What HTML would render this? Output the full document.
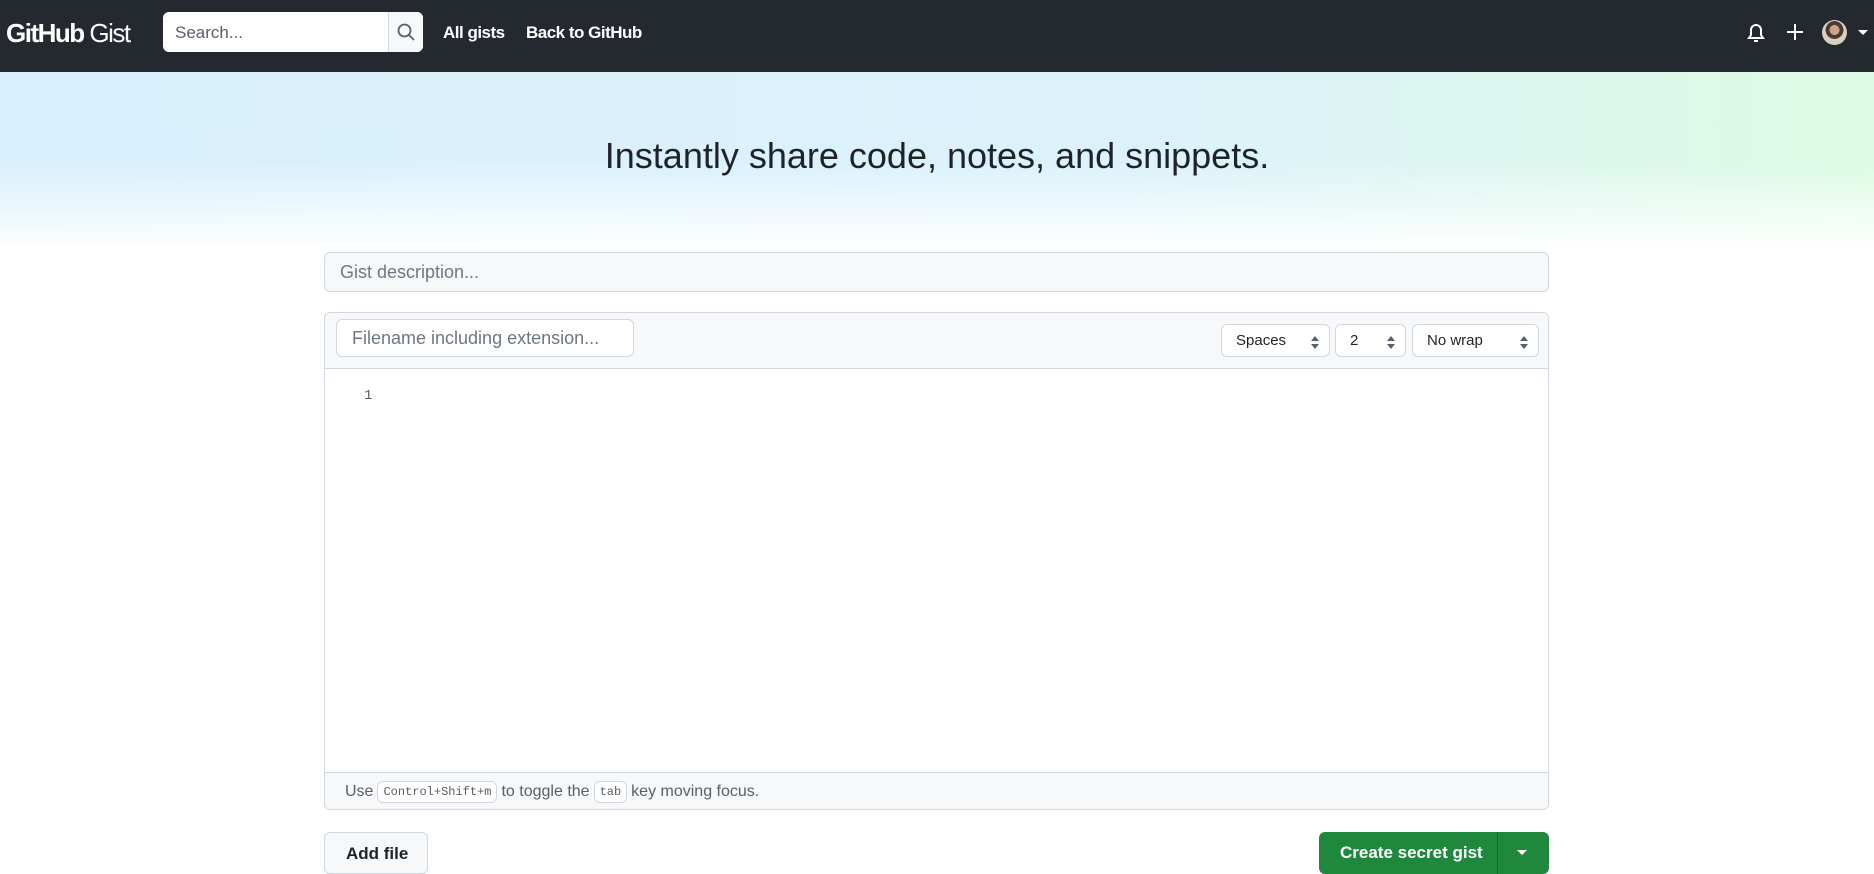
<!DOCTYPE html>
<html><head><meta charset="utf-8"><style>
*{box-sizing:border-box;margin:0;padding:0}
body{width:1874px;height:870px;overflow:hidden;font-family:"Liberation Sans",sans-serif;background:#fff;position:relative;color:#1f2328}
.hdr{position:absolute;left:0;top:0;width:1874px;height:72px;background:#24292f}
.abs{position:absolute}
.hero{position:absolute;top:72px;left:0;width:1874px;height:180px;background:linear-gradient(180deg,rgba(255,255,255,0) 50%,#fff 100%),linear-gradient(90deg,#d8f0fd 0%,#dcf2fb 60%,#dcfbe4 100%)}
.inp{position:absolute;border:1px solid #d0d7de;border-radius:6px;background:#f6f8fa;color:#6e7781;font-size:18px;padding-left:15px;display:flex;align-items:center}
.sel{position:absolute;border:1px solid #d0d7de;border-radius:6px;background:#fff;font-size:15px;display:flex;align-items:center;padding-left:14px;color:#1f2328}
.sel:after{content:"";position:absolute;right:10px;top:11px;width:0;height:0;border:4px solid transparent;border-bottom:5px solid #57606a;border-top:0}
.sel:before{content:"";position:absolute;right:10px;top:19px;width:0;height:0;border:4px solid transparent;border-top:5px solid #57606a;border-bottom:0}
code{font-family:"Liberation Mono",monospace;font-size:12px;border:1px solid #d0d7de;border-radius:6px;padding:3px 5px;background:#fff;margin:0 4px}
</style></head><body>
<div class="hdr">
<div class="abs" style="left:6px;top:18px;color:#fff;font-size:26px;letter-spacing:-1.5px"><b>GitHub</b><span style="font-weight:300"> Gist</span></div>
<div class="abs" style="left:163px;top:12px;width:260px;height:40px;background:#fff;border-radius:6px;overflow:hidden">
<span class="abs" style="left:12px;top:11px;font-size:17px;color:#57606a">Search...</span>
<div class="abs" style="left:225px;top:0;width:35px;height:40px;background:#f6f8fa;border-left:1px solid #d0d7de">
<svg class="abs" style="left:8px;top:11px" width="18" height="18" viewBox="0 0 18 18" fill="none" stroke="#57606a" stroke-width="1.8"><circle cx="7.5" cy="7.5" r="6"/><path d="M12 12l5 5"/></svg></div></div>
<div class="abs" style="left:443px;top:23px;color:#fff;font-size:17px;font-weight:bold;letter-spacing:-0.5px">All gists</div>
<div class="abs" style="left:526px;top:23px;color:#fff;font-size:17px;font-weight:bold;letter-spacing:-0.5px">Back to GitHub</div>
<svg class="abs" style="left:1746px;top:21px" width="20" height="24" viewBox="0 0 20 24" fill="none" stroke="#fff" stroke-width="2"><path d="M3 17h14l-2-3V9a5 5 0 0 0-10 0v5z"/><path d="M8 20h4"/></svg>
<svg class="abs" style="left:1786px;top:23px" width="18" height="18" viewBox="0 0 18 18" stroke="#fff" stroke-width="2"><path d="M9 1v16M1 9h16"/></svg>
<div class="abs" style="left:1822px;top:20px;width:25px;height:25px;border-radius:50%;background:radial-gradient(circle at 50% 40%,#c9a48a 0 25%,#4a3a30 26% 45%,#d8cfc0 46%)"></div>
<div class="abs" style="left:1858px;top:30px;border:5px solid transparent;border-top:5px solid #fff"></div>
</div>
<div class="hero"></div>
<div class="abs" style="left:0;width:1874px;top:135px;text-align:center;font-size:36px;font-weight:300;color:#1f2328">Instantly share code, notes, and snippets.</div>
<div class="inp" style="left:324px;top:252px;width:1225px;height:40px">Gist description...</div>
<div class="abs" style="left:324px;top:312px;width:1225px;height:498px;border:1px solid #d0d7de;border-radius:6px;overflow:hidden">
<div class="abs" style="left:0;top:0;width:1225px;height:56px;background:#f6f8fa;border-bottom:1px solid #d0d7de"></div>
<div class="inp" style="left:11px;top:6px;width:298px;height:38px;background:#fff">Filename including extension...</div>
<div class="sel" style="left:896px;top:11px;width:109px;height:33px">Spaces</div>
<div class="sel" style="left:1010px;top:11px;width:71px;height:33px">2</div>
<div class="sel" style="left:1087px;top:11px;width:127px;height:33px">No wrap</div>
<div class="abs" style="left:39px;top:75px;font-family:'Liberation Mono',monospace;font-size:14px;color:#57606a">1</div>
<div class="abs" style="left:0;top:459px;width:1225px;height:39px;background:#f6f8fa;border-top:1px solid #d0d7de;font-size:16px;color:#57606a;padding-left:20px;display:flex;align-items:center">Use <code>Control+Shift+m</code> to toggle the <code>tab</code> key moving focus.</div>
</div>
<div class="abs" style="left:324px;top:832px;width:104px;height:42px;border:1px solid #d0d7de;border-radius:6px;background:#f6f8fa;font-size:17px;font-weight:bold;padding:11px 0 0 21px">Add file</div>
<div class="abs" style="left:1319px;top:832px;width:230px;height:42px;border-radius:6px;background:#1f883d;color:#fff;font-size:17px;font-weight:bold">
<span class="abs" style="left:21px;top:11px">Create secret gist</span>
<div class="abs" style="left:178px;top:0;width:1px;height:42px;background:#1a6e33"></div>
<div class="abs" style="left:198px;top:18px;border:5px solid transparent;border-top:5px solid #fff"></div></div>
</body></html>
